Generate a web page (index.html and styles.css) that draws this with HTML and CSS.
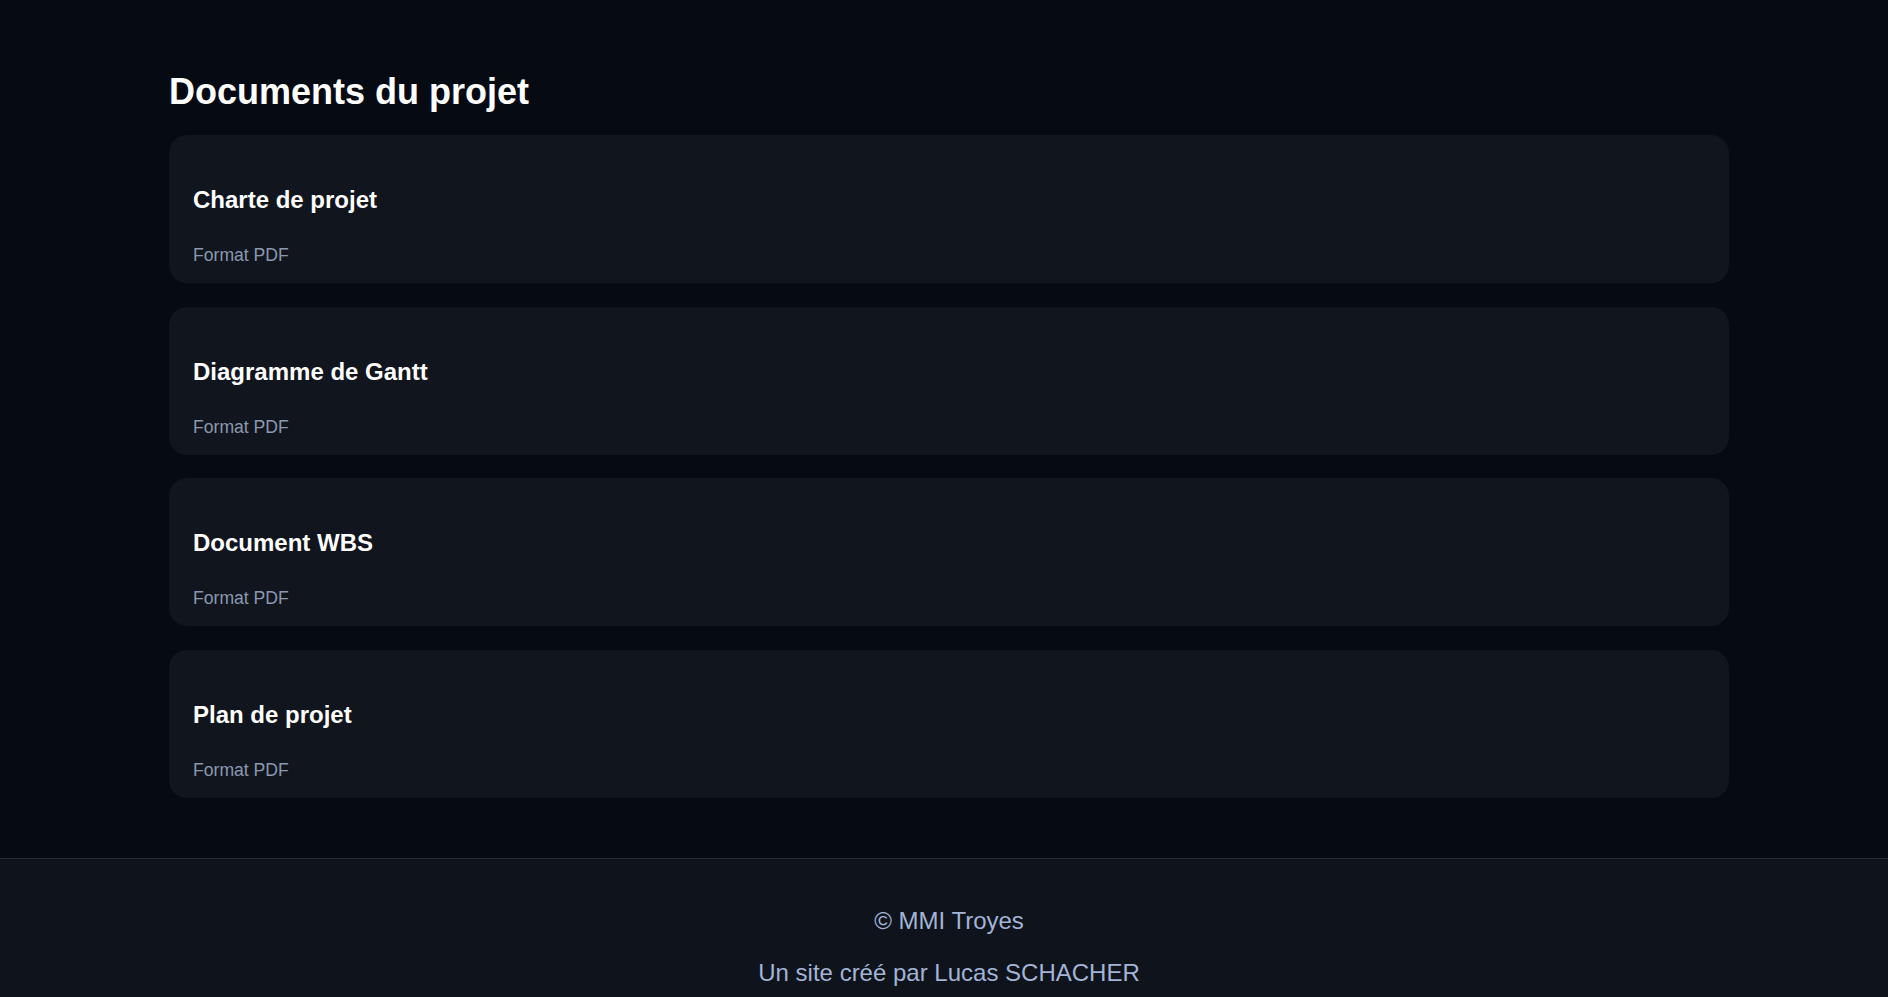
FILE: index.html
```html
<!DOCTYPE html>
<html lang="fr">
<head>
    <meta charset="UTF-8">
    <meta name="viewport" content="width=device-width, initial-scale=1.0">
    <title>Documents du projet</title>
    <link rel="stylesheet" href="styles.css">
</head>
<body>
    <main class="main">
        <div class="container">
            <h2 class="section-title">Documents du projet</h2>
            <div class="doc-list">
                <div class="doc-card">
                    <h3>Charte de projet</h3>
                    <p>Format PDF</p>
                </div>
                <div class="doc-card">
                    <h3>Diagramme de Gantt</h3>
                    <p>Format PDF</p>
                </div>
                <div class="doc-card">
                    <h3>Document WBS</h3>
                    <p>Format PDF</p>
                </div>
                <div class="doc-card">
                    <h3>Plan de projet</h3>
                    <p>Format PDF</p>
                </div>
            </div>
        </div>
    </main>

    <footer class="footer">
        <p>&copy; MMI Troyes</p>
        <p>Un site créé par Lucas SCHACHER</p>
    </footer>
</body>
</html>
```

FILE: styles.css
```css
:root {
    --bg: #060a12;
    --card: #11151d;
    --footer: #0f131b;
    --border: #272c35;
    --muted: #8b98af;
    --soft: #a3b4d6;
}

* {
    box-sizing: border-box;
    margin: 0;
    padding: 0;
}

body {
    font-family: "Liberation Sans", Arial, sans-serif;
    background: var(--bg);
    color: #ffffff;
}

.main {
    padding: 71px 0 60px 10px;
}

.container {
    max-width: 1560px;
    margin: 0 auto;
}

.section-title {
    font-size: 36px;
    line-height: 42px;
    font-weight: 700;
    margin-bottom: 22px;
}

.doc-list {
    display: flex;
    flex-direction: column;
    gap: 23.5px;
}

.doc-card {
    background: var(--card);
    border-radius: 18px;
    padding: 51px 24px 18px;
}

.doc-card h3 {
    font-size: 24px;
    line-height: 28px;
    font-weight: 700;
    margin-bottom: 31px;
}

.doc-card p {
    font-size: 17.6px;
    line-height: 20px;
    color: var(--muted);
}

.footer {
    display: flow-root;
    background: var(--footer);
    border-top: 1px solid var(--border);
    padding: 24px 0 0 10px;
    text-align: center;
    color: var(--soft);
    font-size: 24px;
    line-height: 28px;
}

.footer p {
    margin: 24px 0;
}
```
